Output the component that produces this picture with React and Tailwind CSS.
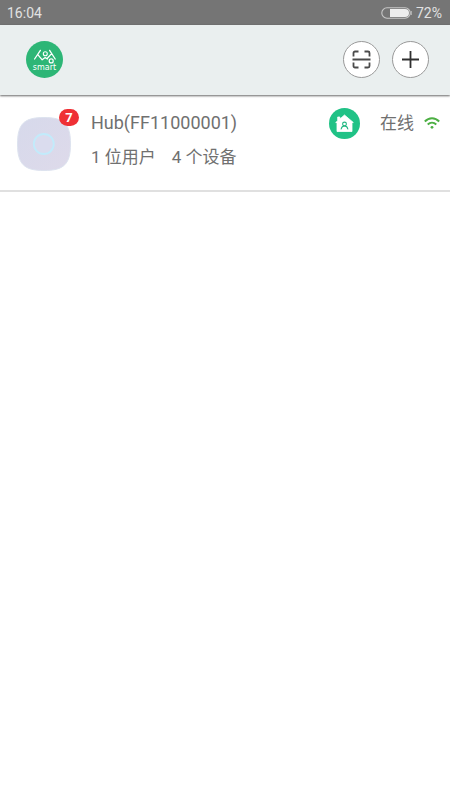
import React from 'react';

const hubs = [
  { id: "FF11000001", name: "Hub(FF11000001)", users: 1, devices: 4, alerts: 7, status: "在线" },
];

function StatusBar() {
  return (
    <div className="flex h-[25px] items-center justify-between bg-[#757575] pl-[7px] pr-2 text-sm text-[#e2e2e2]">
      <span>16:04</span>
      <div className="flex items-center gap-1">
        <svg className="h-3 w-[31px]" viewBox="0 0 31 12" fill="none" aria-hidden="true">
          <rect x="0.8" y="0.8" width="28.4" height="10.4" rx="5.2" stroke="#c8c8c8" strokeWidth="1.1" />
          <path d="M9 2H24a4 4 0 0 1 0 8H9z" fill="#eeeeee" />
          <path d="M30.2 4v4" stroke="#c8c8c8" />
        </svg>
        <span>72%</span>
      </div>
    </div>
  );
}

function Logo() {
  return (
    <svg className="h-[37px] w-[37px]" viewBox="0 0 37 37" fill="none" role="img" aria-label="smart">
      <circle cx="18.5" cy="18.5" r="18.5" fill="#2db676" />
      <g stroke="#ffffff" strokeWidth="1.3" strokeLinecap="round" strokeLinejoin="round">
        <path d="M8.6 18L14.4 9.4M11.8 13.6l4.4 5.2 3-2.2 2.2 1.4M23.6 9.4l5.6 8.6M25.6 12.6l-4.2 4.6" />
        <circle cx="19.3" cy="12.8" r="2" strokeWidth="1.1" />
        <circle cx="25.2" cy="19.9" r="2" strokeWidth="1.2" />
      </g>
      <text x="18.5" y="28.5" textAnchor="middle" fontSize="8" fill="#ffffff" fontFamily="'DejaVu Sans', sans-serif">smart</text>
    </svg>
  );
}

function HubImage() {
  return (
    <svg className="h-[54px] w-[54px]" viewBox="0 0 54 54" fill="none" aria-hidden="true">
      <defs>
        <linearGradient id="hubBody" x1="0" y1="0" x2="1" y2="1">
          <stop offset="0" stopColor="#d6d9eb" />
          <stop offset="1" stopColor="#dedaea" />
        </linearGradient>
      </defs>
      <path d="M27 .5C47 .5 53.5 7 53.5 27S47 53.5 27 53.5 .5 47 .5 27 7 .5 27 .5z" fill="url(#hubBody)" stroke="#dde3ef" />
      <circle cx="26.8" cy="27" r="10" fill="#dadcee" stroke="#c2ebfb" strokeWidth="1.8" />
    </svg>
  );
}

function HomeIcon() {
  return (
    <svg className="h-[31px] w-[31px]" viewBox="0 0 31 31" fill="none" aria-hidden="true">
      <circle cx="15.5" cy="15.5" r="15.5" fill="#20c286" />
      <path d="M15.5 7l8.8 7.5h-1.3v9H8v-9H6.7l2-1.7V9h2.2v2z" fill="#ffffff" stroke="#ffffff" strokeWidth="0.8" strokeLinejoin="round" />
      <g stroke="#20b780" strokeWidth="1.1" strokeLinecap="round">
        <circle cx="15.5" cy="16" r="1.9" />
        <path d="M12.2 21c.3-2 1.3-3 3.3-3s3 1 3.3 3" />
      </g>
    </svg>
  );
}

function WifiIcon() {
  return (
    <svg className="h-3 w-4" viewBox="0 0 16 12" fill="none" stroke="#4caf43" strokeWidth="1.9" aria-hidden="true">
      <path d="M.8 4.5C5 .2 11 .2 15.2 4.5M3.7 7.5c2.5-2.3 6.1-2.3 8.6 0" />
      <circle cx="8" cy="10.3" r="1.4" fill="#4caf43" stroke="none" />
    </svg>
  );
}

function Header() {
  return (
    <header className="relative flex h-[70px] items-center justify-between bg-[#eaefef] pb-px pl-[26px] pr-[21px] shadow-[0_1px_2px_rgba(0,0,0,0.6)]">
      <Logo />
      <div className="flex gap-3">
        <button type="button" aria-label="扫描" className="flex h-[37px] w-[37px] items-center justify-center rounded-full border border-[#999999] bg-white">
          <svg className="h-[19px] w-[19px]" viewBox="0 0 19 19" fill="none" stroke="#4a4a4a" strokeWidth="1.8" aria-hidden="true">
            <path d="M1.5 6.500V3A1.5 1.5 0 0 1 3 1.5H6.5M12.5 1.5H16A1.5 1.5 0 0 1 17.5 3V6.5M17.5 12.5V16a1.5 1.5 0 0 1-1.5 1.5H12.5M6.5 17.5H3A1.5 1.5 0 0 1 1.5 16V12.5M.5 9.5h18" />
          </svg>
        </button>
        <button type="button" aria-label="添加" className="flex h-[37px] w-[37px] items-center justify-center rounded-full border border-[#999999] bg-white">
          <svg className="h-[17px] w-[17px]" viewBox="0 0 17 17" stroke="#303030" strokeWidth="1.8" aria-hidden="true">
            <path d="M8.5 0v17M0 8.5h17" />
          </svg>
        </button>
      </div>
    </header>
  );
}

function HubRow({ hub }) {
  return (
    <li className="flex items-start border-b-2 border-[#e0e0e0] pt-3 pb-[15px] pl-[17px] pr-[10px] text-[#707070]">
      <div className="relative mt-[10px] shrink-0">
        <HubImage />
        <span className="absolute -top-2 -right-2 flex h-[17px] w-5 items-center justify-center rounded-full bg-[#ef3035] text-[13px] font-bold text-white">
          {hub.alerts}
        </span>
      </div>
      <div className="ml-5 min-w-0 flex-1">
        <h2 className="text-lg leading-8">{hub.name}</h2>
        <p className="flex gap-4 text-[17px] leading-9">
          <span>{hub.users} 位用户</span>
          <span>{hub.devices} 个设备</span>
        </p>
      </div>
      <div className="flex h-8 shrink-0 items-center">
        <HomeIcon />
        <span className="ml-5 mr-[10px] text-[17px] leading-8">{hub.status}</span>
        <WifiIcon />
      </div>
    </li>
  );
}

function App() {
  return (
    <div className="min-h-screen bg-white font-[Roboto,'Noto_Sans_CJK_SC',sans-serif]">
      <StatusBar />
      <Header />
      <main>
        <ul>
          {hubs.map((hub) => (
            <HubRow key={hub.id} hub={hub} />
          ))}
        </ul>
      </main>
    </div>
  );
}

export default App;
